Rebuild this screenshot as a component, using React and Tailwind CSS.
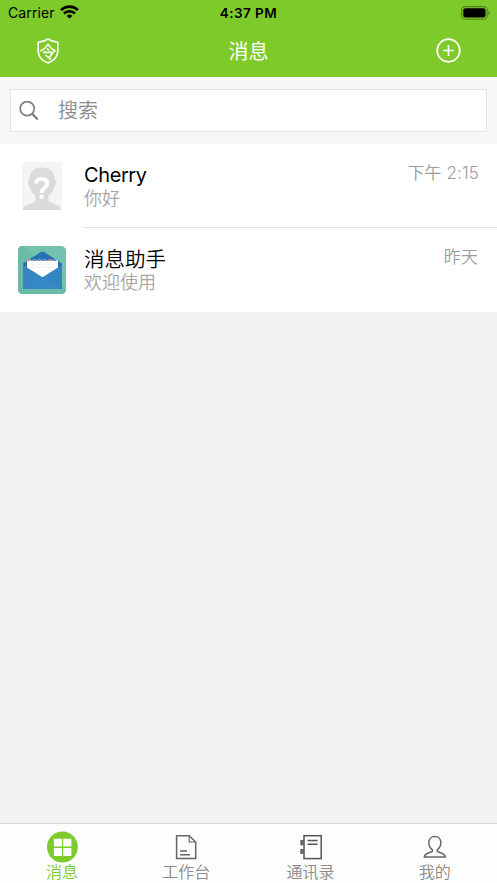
import React from 'react';

function WifiIcon() {
  return (
    <svg className="relative -top-px ml-[5px] h-[14px] w-[19px]" viewBox="0 0 19 14" fill="none" stroke="#000" strokeWidth="2.7">
      <path d="M1 5.1A12.2 12.2 0 0 1 18 5.1" />
      <path d="M4 8.5A7.8 7.8 0 0 1 15 8.5" />
      <path d="M6.7 10.9A4 4 0 0 1 12.3 10.9L9.5 13.6Z" fill="#000" stroke="none" />
    </svg>
  );
}

function BatteryIcon() {
  return (
    <svg className="relative -top-[0.5px] h-[14px] w-[29px]" viewBox="0 0 29 14" fill="none">
      <rect x="0.6" y="0.6" width="25.6" height="12.6" rx="3.8" stroke="#4d8019" strokeWidth="1.1" />
      <rect x="2.3" y="2.2" width="22.2" height="9.4" rx="2" fill="#000" />
      <path d="M27.5 4.6Q29 5.5 29 7T27.5 9.2Z" fill="#4d8019" />
    </svg>
  );
}

function ShieldIcon() {
  return (
    <svg className="h-[26px] w-[22px]" viewBox="0 0 22 26" fill="none" stroke="#fff">
      <path d="M11 1Q6.5 4 1.2 4.3V13C1.2 19 5 22.7 11 25C17 22.7 20.8 19 20.8 13V4.3Q15.5 4 11 1Z" strokeWidth="1.6" />
      <path d="M3.4 13.3Q8 11 11 6.4Q14 11 18.6 13.3M9.9 10.4L12 12.3M6 14.4H16.2L12.6 19M8.3 17.1L14 21.3" strokeWidth="1.6" />
    </svg>
  );
}

function PlusIcon() {
  return (
    <svg className="h-[25px] w-[25px]" viewBox="0 0 25 25" fill="none" stroke="#fff">
      <circle cx="12.5" cy="12.5" r="11.3" strokeWidth="1.7" />
      <path d="M12.5 7V18M7 12.5H18" strokeWidth="1.6" />
    </svg>
  );
}

function SearchIcon() {
  return (
    <svg className="h-[20px] w-[20px]" viewBox="0 0 20 20" fill="none" stroke="#7d7e81">
      <circle cx="8.2" cy="7.6" r="7" strokeWidth="1.7" />
      <path d="M13 12.5L18.7 18.5" strokeWidth="2.3" />
    </svg>
  );
}

function PersonAvatar() {
  return (
    <svg className="mx-1 h-12 w-10 shrink-0" viewBox="0 0 40 48">
      <rect width="40" height="48" fill="#f5f5f5" />
      <path d="M20 5.5C27.5 5.5 32.5 10 32.7 17.5C34.8 18 34.5 22 32.6 24.6C31.7 29 29.5 31.2 26.4 34.5V39C29 42.2 37.8 41.8 38.6 46.5V48H1V46.5C2 41.8 11 42.2 13.6 39V34.5C10.5 31.2 8.3 29 7.4 24.6C5.5 22 5.2 18 7.3 17.5C7.5 10 12.5 5.5 20 5.5Z" fill="#dbdbdb" />
      <path d="M13.9 21.4C14.4 17.7 16.6 16.8 19.5 16.8C23.1 16.8 25.3 18.5 25.3 21.5C25.3 25.6 19.6 26 19.6 31" fill="none" stroke="#fff" strokeWidth="3.8" />
      <rect x="17.6" y="32.8" width="4" height="3.7" fill="#fff" />
    </svg>
  );
}

function MailAvatar() {
  return (
    <svg className="h-12 w-12 shrink-0" viewBox="0 0 48 48">
      <rect width="48" height="48" rx="5" fill="#73c2b0" />
      <path d="M5 0H4Q0 0 0 5V43Q0 48 5 48H43Q48 48 48 43Z" fill="#6bbaa8" />
      <path d="M5 17.5L22.5 6.2Q24.5 5 26.5 6.2L44 17.5V43H5Z" fill="#2873b4" />
      <path d="M9 14.6H40V32H9Z" fill="#fff" />
      <path d="M9.4 14.8a1.6 1.6 0 0 1 3.2 0M14.5 14.8a1.6 1.6 0 0 1 3.2 0M19.7 14.8a1.6 1.6 0 0 1 3.2 0M24.9 14.8a1.6 1.6 0 0 1 3.2 0M30.1 14.8a1.6 1.6 0 0 1 3.2 0M35.5 14.8a1.6 1.6 0 0 1 3.2 0" fill="#fff" />
      <path d="M9.8 14.3H11.6M20.2 14.3H22M30.6 14.3H32.4" stroke="#e45252" strokeWidth="1.4" />
      <path d="M15.2 14.3H17M25.6 14.3H27.4M36 14.3H37.8" stroke="#4569b7" strokeWidth="1.4" />
      <path d="M13 18.2H36M13 21.2H36" stroke="#e6e6e6" strokeWidth=".7" strokeDasharray="4 1" />
      <path d="M5 19L24.5 31.2L44 19V43H5Z" fill="#3385c3" />
      <path d="M5 43L24.5 31.2L44 43Z" fill="#3589c6" />
    </svg>
  );
}

function MessagesIcon() {
  return (
    <svg className="h-[32px] w-[32px]" viewBox="0 0 32 32">
      <circle cx="16.4" cy="16" r="15.4" fill="#7fca2b" />
      <path d="M7.9 7.8H15.9V15.6H7.9ZM17.2 7.8H25.4V15.6H17.2ZM7.9 16.9H15.9V25H7.9ZM17.2 16.9H25.4V25H17.2Z" fill="#fff" />
    </svg>
  );
}

function WorkbenchIcon() {
  return (
    <svg className="h-[32px] w-[32px]" viewBox="0 0 32 32" fill="none" stroke="#656565" strokeWidth="1.5">
      <path d="M6.6 4.7H19.2L25.7 11V27.6H6.6Z" />
      <path d="M19.2 5V11H25.5" strokeWidth="1.2" />
      <path d="M10 20H17M10 23.8H20" strokeWidth="1.6" />
    </svg>
  );
}

function ContactsIcon() {
  return (
    <svg className="h-[32px] w-[32px]" viewBox="0 0 32 32" fill="none" stroke="#555" strokeWidth="1.5">
      <rect x="9" y="4.7" width="17.2" height="22.9" />
      <path d="M12.6 9.6H22.6M12.6 13.2H22.6" />
      <path d="M5.3 9H8.8V14.2H5.3ZM5.3 17.9H8.8V23.1H5.3Z" fill="#666" stroke="none" />
    </svg>
  );
}

function ProfileIcon() {
  return (
    <svg className="h-[32px] w-[32px]" viewBox="0 0 32 32" fill="none" stroke="#666" strokeWidth="1.5">
      <path d="M15.8 5.5C12.1 5.5 9.8 8.2 9.8 11.6C9.8 14.8 11.1 17.2 13.2 18.7C13.7 19.1 13.6 20.3 13 20.6C10.3 21.9 5.3 22.3 5.3 26.1H26.3C26.3 22.3 21.3 21.9 18.6 20.6C18 20.3 17.9 19.1 18.4 18.7C20.5 17.2 21.8 14.8 21.8 11.6C21.8 8.2 19.5 5.5 15.8 5.5Z" />
    </svg>
  );
}

const chats = [
  { name: 'Cherry', text: '你好', time: '下午 2:15', Avatar: PersonAvatar, nameStyle: 'text-[20px] leading-[26px] tracking-[-0.4px] text-black' },
  { name: '消息助手', text: '欢迎使用', time: '昨天', Avatar: MailAvatar, nameStyle: 'h-[26px] pt-px text-[20.5px] font-[350] leading-[26px] text-black' },
];

const tabs = [
  { label: '消息', Icon: MessagesIcon, active: true },
  { label: '工作台', Icon: WorkbenchIcon },
  { label: '通讯录', Icon: ContactsIcon },
  { label: '我的', Icon: ProfileIcon },
];

export default function App() {
  return (
    <div className="flex h-[883px] w-[497px] flex-col overflow-hidden bg-[#f2f2f2] font-['Inter','Noto_Sans_CJK_SC',sans-serif]">
      <header className="h-[77px] shrink-0 bg-[#7fca2b]">
        <div className="grid h-[26px] grid-cols-3 items-center text-black">
          <div className="flex items-center pl-2">
            <span className="text-[14px] leading-5 tracking-[0.1px]">Carrier</span>
            <WifiIcon />
          </div>
          <span className="text-center text-[13.5px] font-semibold leading-5 tracking-[0.45px]">4:37 PM</span>
          <div className="flex justify-end pr-[7px]">
            <BatteryIcon />
          </div>
        </div>
        <div className="grid h-[49px] grid-cols-3 items-center">
          <div className="pl-[37px]"><ShieldIcon /></div>
          <h1 className="pt-[2px] text-center text-[20px] font-normal leading-6 text-white">消息</h1>
          <div className="flex justify-end pr-9"><PlusIcon /></div>
        </div>
      </header>

      <div className="h-[67px] shrink-0 bg-[#f7f7f7] px-[10px] pt-3">
        <div className="flex h-[43px] items-center border border-[#e3e3e3] bg-white pl-2">
          <SearchIcon />
          <span className="ml-[19px] pt-px text-[20px] font-[350] leading-6 text-[#8a8a8d]">搜索</span>
        </div>
      </div>

      <main className="shrink-0 bg-white">
        {chats.map(({ name, text, time, Avatar, nameStyle }, index) => (
          <div key={name} className="flex h-[84px] pl-[18px]">
            <div className="mr-[18px] pt-[18px]"><Avatar /></div>
            <div className={index === 0 ? 'flex flex-1 justify-between border-b border-[#e3e3e3] pr-[18px] pt-[18px]' : 'flex flex-1 justify-between pr-[19px] pt-[18px]'}>
              <div>
                <div className={nameStyle}>{name}</div>
                <div className="text-[18px] font-[350] leading-[22px] text-[#a5a5a5]">{text}</div>
              </div>
              <span className="pt-px text-[17px] font-[350] leading-[21px] tracking-[0.1px] text-[#9b9b9b]">{time}</span>
            </div>
          </div>
        ))}
      </main>

      <nav className="mt-auto grid h-[60px] shrink-0 grid-cols-4 border-t border-[#d8d8d8] bg-[#fdfdfd]">
        {tabs.map(({ label, Icon, active }) => (
          <div key={label} className="flex flex-col items-center pt-[7px]">
            <Icon />
            <span className={active ? '-mt-px text-[16px] font-[350] leading-[20px] text-[#7fca2b]' : '-mt-px text-[16px] font-[350] leading-[20px] text-[#8a8a8a]'}>{label}</span>
          </div>
        ))}
      </nav>
    </div>
  );
}
